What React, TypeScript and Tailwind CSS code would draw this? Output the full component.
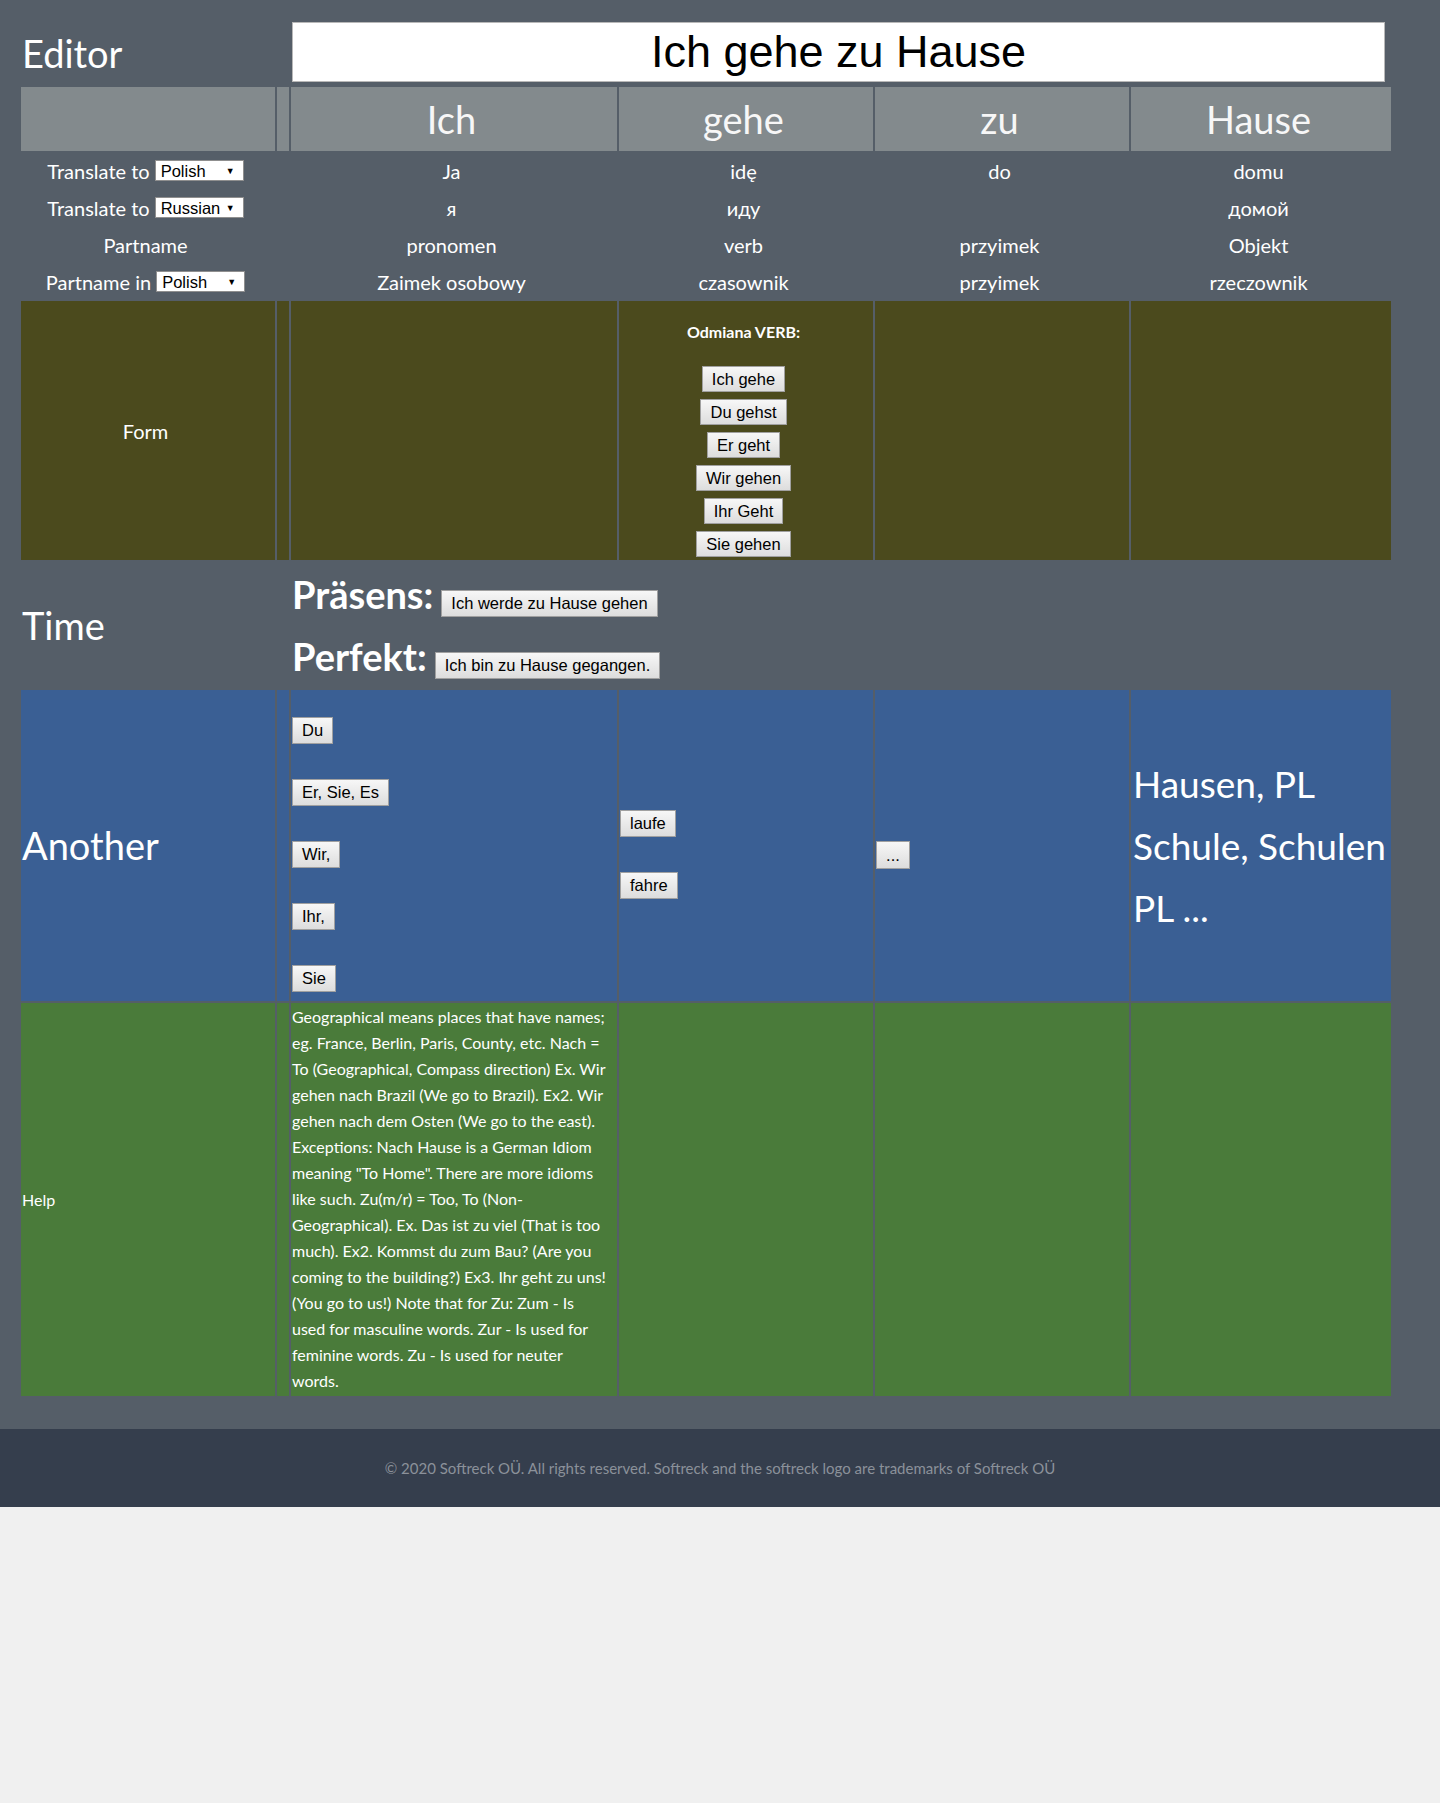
import React from "react";

const lato = "font-['Lato','Noto_Sans',sans-serif]";
const arial = "font-['Liberation_Sans',Arial,sans-serif]";

function Btn({ children, className = "" }: { children: React.ReactNode; className?: string }) {
  return (
    <button
      className={`${arial} bg-linear-to-b from-[#f7f7f7] to-[#dddddd] border border-[#a0a0a0] text-black text-[16.5px] px-[9px] whitespace-nowrap ${className}`}
    >
      {children}
    </button>
  );
}

function Sel({ label }: { label: string }) {
  return (
    <span
      className={`${arial} inline-flex items-center justify-between w-[89px] h-[21px] bg-white border border-[#8f8f8f] text-[16.5px] leading-[18px] text-black pl-[5px] pr-[8px] ml-[5px]`}
    >
      <span>{label}</span>
      <span className="text-[9px]">▼</span>
    </span>
  );
}

const helpLines = [
  "Geographical means places that have names;",
  "eg. France, Berlin, Paris, County, etc. Nach =",
  "To (Geographical, Compass direction) Ex. Wir",
  "gehen nach Brazil (We go to Brazil). Ex2. Wir",
  "gehen nach dem Osten (We go to the east).",
  "Exceptions: Nach Hause is a German Idiom",
  'meaning "To Home". There are more idioms',
  "like such. Zu(m/r) = Too, To (Non-",
  "Geographical). Ex. Das ist zu viel (That is too",
  "much). Ex2. Kommst du zum Bau? (Are you",
  "coming to the building?) Ex3. Ihr geht zu uns!",
  "(You go to us!) Note that for Zu: Zum - Is",
  "used for masculine words. Zur - Is used for",
  "feminine words. Zu - Is used for neuter",
  "words.",
];

const rows: { label: React.ReactNode; vals: string[] }[] = [
  { label: <>Translate to<Sel label="Polish" /></>, vals: ["Ja", "idę", "do", "domu"] },
  { label: <>Translate to<Sel label="Russian" /></>, vals: ["я", "иду", "", "домой"] },
  { label: <>Partname</>, vals: ["pronomen", "verb", "przyimek", "Objekt"] },
  { label: <>Partname in<Sel label="Polish" /></>, vals: ["Zaimek osobowy", "czasownik", "przyimek", "rzeczownik"] },
];

export default function App() {
  return (
    <div className="min-h-[1803px] bg-[#f0f0f0]">
      <div className={`bg-[#555e68] pt-[21px] pl-[21px] pb-[33px] ${lato} text-white`}>
        <div className="grid w-max grid-cols-[254px_12px_326px_254px_254px_260px] grid-rows-[64px_64px_35px_35px_35px_35px_259px_126px_311px_393px] gap-[2px]">
          {/* Row 0 */}
          <div className="flex items-center px-[1px] text-[38px] leading-none">Editor</div>
          <div />
          <div className="col-span-4 p-[1px]">
            <div
              className={`${arial} w-[1093px] h-[60px] bg-white border border-[#b8b8b8] flex items-center justify-center text-black text-[45px]`}
            >
              Ich gehe zu Hause
            </div>
          </div>

          {/* Header */}
          <div className="bg-[#838a8d]" />
          <div className="bg-[#838a8d]" />
          {["Ich", "gehe", "zu", "Hause"].map((w) => (
            <div key={w} className="bg-[#838a8d] flex items-center justify-center pr-[5px] text-[38px] text-[#f7f7f7]">
              {w}
            </div>
          ))}

          {/* Translate rows */}
          {rows.map((r, i) => (
            <React.Fragment key={i}>
              <div className="flex items-center justify-center pr-[5px] text-[20px] whitespace-nowrap">{r.label}</div>
              <div />
              {r.vals.map((v, j) => (
                <div key={j} className="flex items-center justify-center pr-[5px] text-[20px]">
                  {v}
                </div>
              ))}
            </React.Fragment>
          ))}

          {/* Form row */}
          <div className="bg-[#4b4a1d] flex items-center justify-center pr-[5px] text-[20px]">Form</div>
          <div className="bg-[#4b4a1d]" />
          <div className="bg-[#4b4a1d]" />
          <div className="bg-[#4b4a1d] flex flex-col items-center pt-[21px] pr-[5px]">
            <div className="text-[16px] font-bold leading-[19px]">Odmiana VERB:</div>
            <div className="mt-[25px] flex flex-col items-center gap-[7px]">
              <Btn className="leading-[18px] py-[3px]">Ich gehe</Btn>
              <Btn className="leading-[18px] py-[3px]">Du gehst</Btn>
              <Btn className="leading-[18px] py-[3px]">Er geht</Btn>
              <Btn className="leading-[18px] py-[3px]">Wir gehen</Btn>
              <Btn className="leading-[18px] py-[3px]">Ihr Geht</Btn>
              <Btn className="leading-[18px] py-[3px]">Sie gehen</Btn>
            </div>
          </div>
          <div className="bg-[#4b4a1d]" />
          <div className="bg-[#4b4a1d]" />

          {/* Time row */}
          <div className="flex items-center px-[1px] text-[38px]">Time</div>
          <div />
          <div className="col-span-4 p-[1px] flex flex-col">
            <div className="flex items-baseline gap-[8px] leading-[62px]">
              <span className="text-[38px] font-bold">Präsens:</span>
              <Btn className="leading-[19px] py-[3px]">Ich werde zu Hause gehen</Btn>
            </div>
            <div className="flex items-baseline gap-[8px] leading-[62px]">
              <span className="text-[38px] font-bold">Perfekt:</span>
              <Btn className="leading-[19px] py-[3px]">Ich bin zu Hause gegangen.</Btn>
            </div>
          </div>

          {/* Another row */}
          <div className="bg-[#3a5f94] flex items-center px-[1px] text-[38px]">Another</div>
          <div className="bg-[#3a5f94]" />
          <div className="bg-[#3a5f94] flex flex-col items-start gap-[35px] pt-[27px] px-[1px]">
            <Btn className="leading-[19px] py-[3px]">Du</Btn>
            <Btn className="leading-[19px] py-[3px]">Er, Sie, Es</Btn>
            <Btn className="leading-[19px] py-[3px]">Wir,</Btn>
            <Btn className="leading-[19px] py-[3px]">Ihr,</Btn>
            <Btn className="leading-[19px] py-[3px]">Sie</Btn>
          </div>
          <div className="bg-[#3a5f94] flex flex-col items-start justify-center gap-[35px] pt-[18px] px-[1px]">
            <Btn className="leading-[19px] py-[3px]">laufe</Btn>
            <Btn className="leading-[19px] py-[3px]">fahre</Btn>
          </div>
          <div className="bg-[#3a5f94] flex flex-col items-start justify-center pt-[18px] px-[1px]">
            <Btn className="text-[13px] leading-[16px] h-[28px] w-[34px] px-0">...</Btn>
          </div>
          <div className="bg-[#3a5f94] flex flex-col justify-center px-[2px] text-[37px] leading-[62px] whitespace-nowrap">
            <div>Hausen, PL</div>
            <div>Schule, Schulen</div>
            <div>PL ...</div>
          </div>

          {/* Help row */}
          <div className="bg-[#4a7b3a] flex items-center px-[1px] text-[16px]">Help</div>
          <div className="bg-[#4a7b3a]" />
          <div className="bg-[#4a7b3a] p-[1px] text-[16px] leading-[26px]">
            {helpLines.map((l, i) => (
              <div key={i} className="whitespace-nowrap">
                {l}
              </div>
            ))}
          </div>
          <div className="bg-[#4a7b3a]" />
          <div className="bg-[#4a7b3a]" />
          <div className="bg-[#4a7b3a]" />
        </div>
      </div>
      <footer className={`${lato} h-[78px] bg-[#353e4d] flex items-center justify-center text-[15px] text-[#8b919a]`}>
        © 2020 Softreck OÜ. All rights reserved. Softreck and the softreck logo are trademarks of Softreck OÜ
      </footer>
    </div>
  );
}
